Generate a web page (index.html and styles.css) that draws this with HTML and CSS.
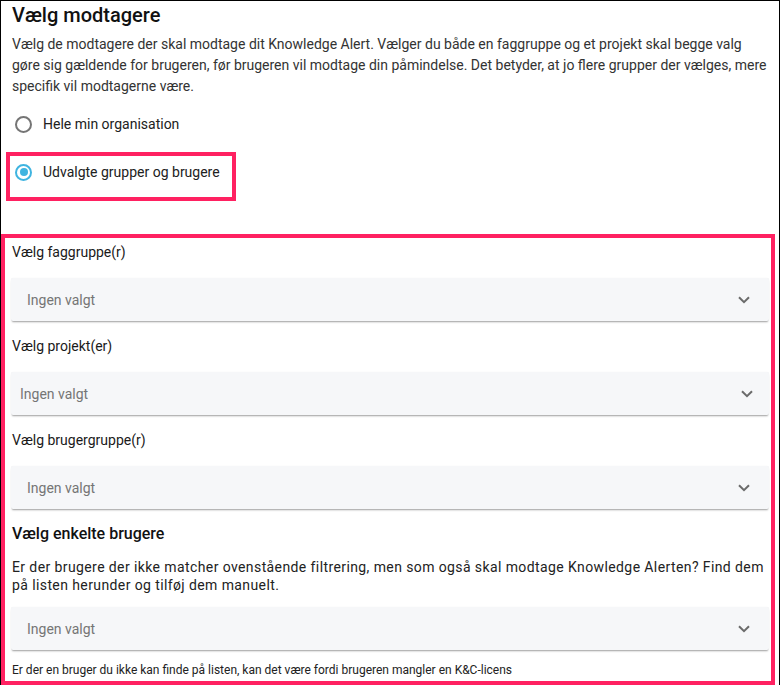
FILE: index.html
```html
<!DOCTYPE html>
<html lang="da">
<head>
<meta charset="utf-8">
<title>Vælg modtagere</title>
<link rel="stylesheet" href="styles.css">
</head>
<body>
<div class="page">
  <div class="intro">
    <h1>Vælg modtagere</h1>
    <p>Vælg de modtagere der skal modtage dit Knowledge Alert. Vælger du både en faggruppe og et projekt skal begge valg gøre sig gældende for brugeren, før brugeren vil modtage din påmindelse. Det betyder, at jo flere grupper der vælges, mere specifik vil modtagerne være.</p>
  </div>

  <div class="radios">
    <label class="option">
      <span class="radio"></span>
      <span>Hele min organisation</span>
    </label>
    <label class="option option-marked">
      <span class="radio radio-on"></span>
      <span>Udvalgte grupper og brugere</span>
    </label>
  </div>

  <div class="filters">
    <div class="field">
      <div class="field-label">Vælg faggruppe(r)</div>
      <div class="select">
        <span>Ingen valgt</span>
        <svg class="chev" width="12" height="8" viewBox="0 0 12 8"><path d="M1 1.2l5 5 5-5" fill="none" stroke="#6b6b6b" stroke-width="2"/></svg>
      </div>
    </div>
    <div class="field">
      <div class="field-label">Vælg projekt(er)</div>
      <div class="select select-tight">
        <span>Ingen valgt</span>
        <svg class="chev" width="12" height="8" viewBox="0 0 12 8"><path d="M1 1.2l5 5 5-5" fill="none" stroke="#6b6b6b" stroke-width="2"/></svg>
      </div>
    </div>
    <div class="field">
      <div class="field-label">Vælg brugergruppe(r)</div>
      <div class="select">
        <span>Ingen valgt</span>
        <svg class="chev" width="12" height="8" viewBox="0 0 12 8"><path d="M1 1.2l5 5 5-5" fill="none" stroke="#6b6b6b" stroke-width="2"/></svg>
      </div>
    </div>

    <h2>Vælg enkelte brugere</h2>
    <p class="users-text">Er der brugere der ikke matcher ovenstående filtrering, men som også skal modtage Knowledge Alerten? Find dem på listen herunder og tilføj dem manuelt.</p>
    <div class="select select-users">
      <span>Ingen valgt</span>
      <svg class="chev" width="12" height="8" viewBox="0 0 12 8"><path d="M1 1.2l5 5 5-5" fill="none" stroke="#6b6b6b" stroke-width="2"/></svg>
    </div>
    <div class="hint">Er der en bruger du ikke kan finde på listen, kan det være fordi brugeren mangler en K&amp;C-licens</div>
  </div>
</div>
</body>
</html>
```

FILE: styles.css
```css
:root{
  --mark: #ff2161;
  --text: #212121;
  --muted: #757575;
  --field-bg: #f6f7f9;
  --accent: #3fb4e0;
}
*{box-sizing:border-box}
body{margin:0;background:#fff;font-family:Roboto,"Liberation Sans",Arial,sans-serif;color:var(--text)}

.page{
  width:780px;height:685px;overflow:hidden;
  border:1px solid #000;border-bottom:none;
}

/* ---------- intro ---------- */
.intro{padding:0 11px}
h1{margin:2px 0 0;font-size:20px;line-height:24px;font-weight:500;color:#111}
.intro p{margin:7px 0 0;font-size:14px;line-height:21px;color:#333}

/* ---------- radio options ---------- */
.radios{display:flex;flex-direction:column;align-items:flex-start;margin:15px 0 0 5px}
.option{display:flex;align-items:center;gap:11px;height:24px;padding-left:9px;font-size:14px;white-space:nowrap;color:var(--text)}
.option-marked{
  width:230px;height:49px;margin-top:16px;
  border:4px solid var(--mark);padding:0 0 9px 5px;
}
.radio{
  width:17px;height:17px;border-radius:50%;flex:none;
  border:2px solid var(--muted);background:#fff;
}
.radio-on{border-color:var(--accent);position:relative}
.radio-on::after{
  content:"";position:absolute;inset:2.5px;border-radius:50%;background:var(--accent);
}

/* ---------- filters ---------- */
.filters{
  margin-top:33px;width:774px;height:451px;
  border:4px solid var(--mark);
  padding:4px 2px 0 6px;
}
.field{padding-bottom:15px}
.field-label{margin-left:1px;font-size:14px;line-height:20px;color:#1a1a1a}
.select{
  height:43px;margin-top:16px;display:flex;align-items:center;justify-content:space-between;
  padding:0 19px 0 16px;background:var(--field-bg);border-radius:2px;
  box-shadow:0 2px 2px -1px rgba(0,0,0,.38),0 0 1px rgba(0,0,0,.08);
  font-size:14px;color:var(--muted);
}
.select-tight{padding:0 16px 0 9px}
.chev{flex:none}

h2{margin:0 0 0 1px;font-size:16px;line-height:20px;font-weight:500;color:#111}
.users-text{margin:14px 0 0 1px;font-size:14px;line-height:18px;letter-spacing:.4px;color:#222}
.select-users{margin-top:13px}
.hint{margin:12px 0 0 1px;font-size:12px;line-height:16px;color:#222}
```
